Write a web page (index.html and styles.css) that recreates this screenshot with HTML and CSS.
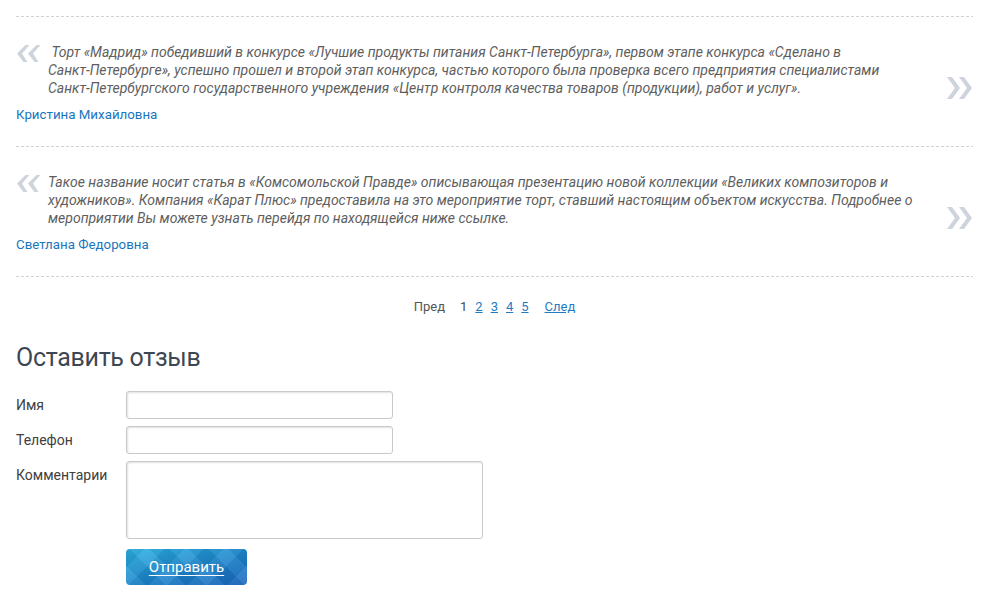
FILE: index.html
```html
<!DOCTYPE html>
<html lang="ru">
<head>
<meta charset="utf-8">
<title>Отзывы</title>
<link rel="stylesheet" href="styles.css">
</head>
<body>
<div class="page">
  <div class="reviews">
    <div class="review">
      <div class="quote">
        <svg class="q-open" width="24" height="17" viewBox="0 0 24 17"><polygon points="8.5,0 12.5,0 5,8.5 10.5,17 6.5,17 0,8.5"/><polygon points="19.5,0 23.5,0 16,8.5 21.5,17 17.5,17 11,8.5"/></svg>
        <p class="q-text">&nbsp;Торт «Мадрид» победивший в конкурсе «Лучшие продукты питания <span class="nw">Санкт-Петербурга»,</span> первом этапе конкурса «Сделано в <span class="nw">Санкт-Петербурге»,</span> успешно прошел и второй этап конкурса, частью которого была проверка всего предприятия специалистами <span class="nw">Санкт-Петербургского</span> государственного учреждения «Центр контроля качества товаров (продукции), работ и услуг».</p>
        <svg class="q-close" width="26" height="22" viewBox="0 0 26 22"><polygon points="0,0 5,0 13,11 5,22 0,22 8,11"/><polygon points="12,0 17,0 25,11 17,22 12,22 20,11"/></svg>
      </div>
      <div class="author">Кристина Михайловна</div>
    </div>
    <div class="review">
      <div class="quote">
        <svg class="q-open" width="24" height="17" viewBox="0 0 24 17"><polygon points="8.5,0 12.5,0 5,8.5 10.5,17 6.5,17 0,8.5"/><polygon points="19.5,0 23.5,0 16,8.5 21.5,17 17.5,17 11,8.5"/></svg>
        <p class="q-text">Такое название носит статья в «Комсомольской Правде» описывающая презентацию новой коллекции «Великих композиторов и художников». Компания «Карат Плюс» предоставила на это мероприятие торт, ставший настоящим объектом искусства. Подробнее о мероприятии Вы можете узнать перейдя по находящейся ниже ссылке.</p>
        <svg class="q-close" width="26" height="22" viewBox="0 0 26 22"><polygon points="0,0 5,0 13,11 5,22 0,22 8,11"/><polygon points="12,0 17,0 25,11 17,22 12,22 20,11"/></svg>
      </div>
      <div class="author">Светлана Федоровна</div>
    </div>
  </div>

  <nav class="pager">
    <span class="pager-prev">Пред</span>
    <span class="pager-current">1</span>
    <a href="#" class="pager-link">2</a>
    <a href="#" class="pager-link">3</a>
    <a href="#" class="pager-link">4</a>
    <a href="#" class="pager-link">5</a>
    <a href="#" class="pager-link pager-next">След</a>
  </nav>

  <h2 class="form-title">Оставить отзыв</h2>
  <form class="feedback">
    <label class="f-label" for="name">Имя</label>
    <input class="f-input" id="name" type="text">
    <label class="f-label" for="phone">Телефон</label>
    <input class="f-input" id="phone" type="text">
    <label class="f-label" for="comment">Комментарии</label>
    <textarea class="f-area" id="comment"></textarea>
    <span></span>
    <button type="button" class="f-submit">Отправить</button>
  </form>
</div>
</body>
</html>
```
FILE: styles.css
```css
* { box-sizing: border-box; }
body {
  margin: 0;
  background: #fff;
  font-family: Roboto, "Liberation Sans", sans-serif;
  color: #444;
}
.page {
  padding: 0 15px 0 16px;
}
.reviews {
  margin-top: 16px;
  padding-top: 1px;
  background: repeating-linear-gradient(90deg, #ccd3da 0 3px, transparent 3px 5px) top left / 100% 1px no-repeat;
}
.review {
  padding: 26px 0 23px;
  background: repeating-linear-gradient(90deg, #ccd3da 0 3px, transparent 3px 5px) bottom left / 100% 1px no-repeat;
}
.quote {
  display: flex;
  align-items: flex-end;
}
.q-open {
  align-self: flex-start;
  flex: none;
  margin: 2px 7px 0 1px;
  fill: #cdd4db;
}
.q-close {
  flex: none;
  margin-bottom: -2px;
  fill: #cdd4db;
}
.q-text {
  flex: 1;
  margin: 0;
  font-size: 14px;
  line-height: 18px;
  font-style: italic;
  color: #5e5e5e;
}
.nw { white-space: nowrap; }
.author {
  margin-top: 9px;
  font-size: 13.3px;
  line-height: 18px;
  color: #1976c0;
}
.pager {
  display: flex;
  justify-content: center;
  gap: 8px;
  padding-top: 21px;
  font-size: 13px;
  line-height: 18px;
}
.pager-prev { color: #555; margin-right: 7px; }
.pager-current { color: #444; }
.pager-link { color: #1f7cc4; text-decoration: underline; }
.pager-next { margin-left: 8px; }
.form-title {
  margin: 27px 0 0;
  font-size: 25px;
  letter-spacing: -0.3px;
  line-height: 30px;
  font-weight: 400;
  color: #3d4753;
}
.feedback {
  margin-top: 18px;
  display: grid;
  grid-template-columns: 110px auto;
  row-gap: 7px;
  justify-items: start;
}
.f-label {
  font-size: 14px;
  line-height: 28px;
  color: #404040;
}
.f-input, .f-area {
  display: block;
  margin: 0;
  border: 1px solid #c6c9cd;
  border-radius: 3px;
  box-shadow: inset 1px 1px 2px rgba(0, 0, 0, 0.12);
  background: #fff;
  font-family: inherit;
}
.f-input { width: 267px; height: 28px; }
.f-area { width: 357px; height: 78px; resize: none; }
.f-submit {
  margin-top: 3px;
  width: 121px;
  height: 36px;
  border: 0;
  border-radius: 4px;
  color: #fff;
  font-family: inherit;
  font-size: 15px;
  text-decoration: underline;
  text-underline-offset: 3px;
  cursor: pointer;
  background:
    repeating-linear-gradient(45deg, rgba(255,255,255,0.06) 0 14px, rgba(0,0,0,0.04) 14px 28px),
    repeating-linear-gradient(-45deg, rgba(255,255,255,0.06) 0 14px, rgba(0,0,0,0.04) 14px 28px),
    linear-gradient(165deg, #2bb0e2 0%, #1d88cd 50%, #1866be 100%);
}
```
